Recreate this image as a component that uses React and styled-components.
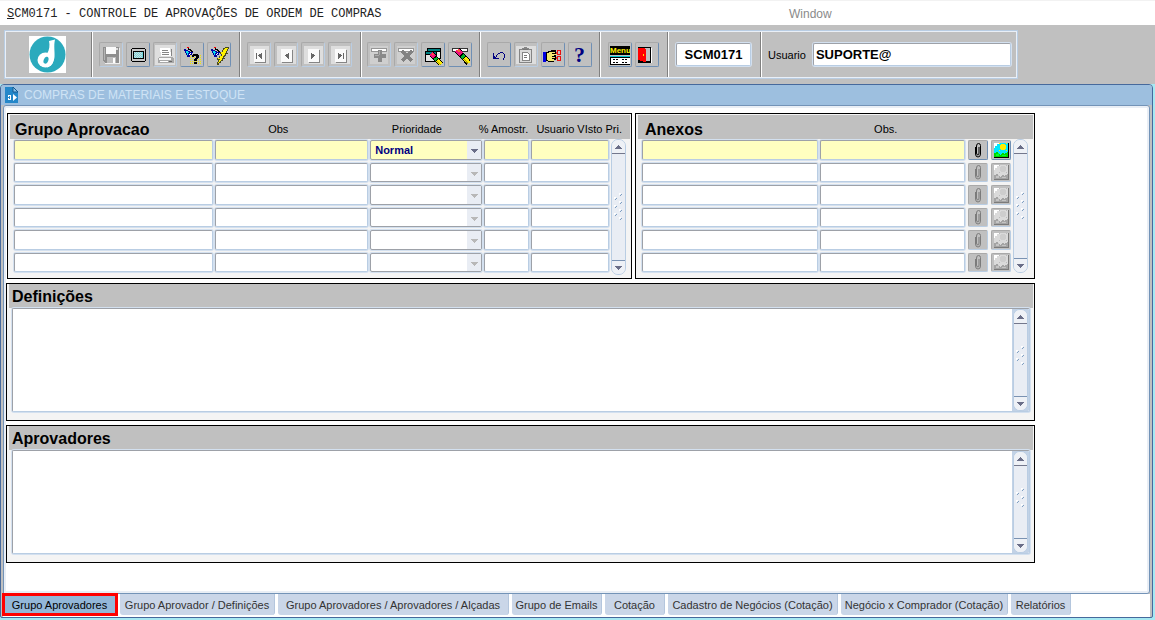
import React, { useState } from 'react';
import styled, { createGlobalStyle, css } from 'styled-components';

const GlobalStyle = createGlobalStyle`
    * {
        box-sizing: border-box;
    }
    body {
        margin: 0;
        font-family: "Liberation Sans", Arial, sans-serif;
        font-size: 11px;
        color: #000;
        background-color: #a6e8f2;
    }
    button, input, select, textarea {
        font: inherit;
        color: inherit;
        margin: 0;
        padding: 0;
    }
`;

const Page = styled.div`
    display: flex;
    flex-direction: column;
    min-height: 100vh;
`;

const MenuBar = styled.header`
    display: flex;
    align-items: center;
    height: 25px;
    padding: 1px 0 0 7px;
    background-color: #fff;
    border-top: 1px solid #f2f2f2;
`;

const MenuTitle = styled.h1`
    flex: 0 0 782px;
    margin: 0;
    font-family: "Liberation Mono", "Courier New", monospace;
    font-size: 12px;
    font-weight: normal;
    color: #222;
`;

const MenuItem = styled.button`
    border: none;
    background: none;
    font-size: 12px;
    color: #8a8a8a;
`;

const ToolArea = styled.div`
    padding: 5px 4px;
    background-color: #c0c0c0;
`;

const Toolbar = styled.div`
    display: flex;
    max-width: 1014px;
    height: 49px;
    border: 1px solid #b9cde3;
    outline: 1px solid #e9eff7;
    outline-offset: -2px;
`;

const ToolGroup = styled.div`
    display: flex;
    flex: ${props => props.$width ? `0 0 ${props.$width}px` : '1'};
    align-items: center;
    justify-content: center;
    gap: ${props => props.$gap || 3}px;
    padding-right: 2px;
    border-right: 1px solid #808080;
    border-left: 1px solid #fff;
    &:first-child {
        border-left-color: transparent;
    }
    &:last-child {
        padding: 0 6px;
        border-right: none;
    }
`;

const ToolButton = styled.button`
    display: flex;
    align-items: center;
    justify-content: center;
    width: 24px;
    height: 25px;
    background-color: #c0c0c0;
    border: 1px solid;
    border-color: ${props => props.disabled ? '#a9a9a9 #b9cde3 #b9cde3 #a9a9a9' : '#a9a9a9 #6f8fb4 #6f8fb4 #a9a9a9'};
    border-radius: 2px;
    svg {
        display: block;
        flex: none;
    }
`;

const HelpMark = styled.span`
    font-family: "Liberation Serif", "Times New Roman", serif;
    font-size: 22px;
    line-height: 22px;
    font-weight: bold;
    color: #000080;
`;

const fieldBorder = css`
    border: 1px solid;
    border-color: #9da1a8 #b9cde3 #b9cde3 #9da1a8;
    border-radius: 2px;
    box-shadow: 0 0 0 1px #d3e0ef;
`;

const ToolInput = styled.input`
    ${fieldBorder}
    flex: ${props => props.$width ? `0 0 ${props.$width}px` : '1'};
    min-width: 0;
    height: 23px;
    padding: 0 2px;
    font-size: 13px;
    font-weight: bold;
    text-align: ${props => props.$center ? 'center' : 'left'};
    background-color: #fff;
`;

const Window = styled.section`
    display: flex;
    flex: 1;
    flex-direction: column;
    margin: 0 2px 2px 0;
    background-color: #c0c0c0;
    border: 1px solid #46699c;
    border-radius: 4px 4px 2px 2px;
`;

const WindowTitle = styled.div`
    display: flex;
    align-items: center;
    gap: 5px;
    height: 20px;
    padding-left: 4px;
    background-color: #9dbfdf;
    border-radius: 3px 3px 0 0;
    h2 {
        margin: 0;
        font-size: 12px;
        font-weight: normal;
        color: #cfe3f5;
    }
`;

const Content = styled.main`
    flex: 1;
    margin: 0 2px;
    padding: 5px 0 0;
    background-color: #fff;
    border: 1px solid #7393b7;
    border-radius: 3px 3px 3px 0;
    box-shadow: inset 0 0 0 2px #e9eef5;
`;

const Panels = styled.div`
    display: flex;
    flex-direction: column;
    gap: 4px;
    max-width: 1031px;
    padding: 2px 0 0 2px;
`;

const PanelRow = styled.div`
    display: flex;
    gap: 3px;
    padding-left: 1px;
`;

const Panel = styled.section`
    flex: ${props => props.$grow || 'none'};
    min-width: 0;
    padding: ${props => props.$grow ? '1px 1px 0 2px' : '0 1px 0 2px'};
    background-color: #f4f4f4;
    border: 1px solid #000;
`;

const PanelTitle = styled.h3`
    margin: 0;
    font-size: 16px;
    line-height: ${props => props.$tall ? '22px' : '18px'};
    font-weight: bold;
`;

const PanelHeader = styled.div`
    display: grid;
    grid-template-columns: ${props => props.$columns};
    align-items: end;
    height: 24px;
    padding: 0 8px 0 ${props => props.$indent}px;
    background-color: #c0c0c0;
`;

const ColumnLabel = styled.span`
    line-height: 20px;
    text-align: ${props => props.$align || 'center'};
    white-space: nowrap;
`;

const GridBody = styled.div`
    display: flex;
    gap: 2px;
    height: 139px;
    padding: 0 ${props => props.$right}px 0 4px;
`;

const Records = styled.div`
    display: grid;
    flex: 1;
    grid-template-rows: repeat(6, 1fr);
    gap: 3px;
    height: 133px;
    padding-top: 1px;
`;

const Record = styled.div`
    display: grid;
    grid-template-columns: ${props => props.$columns};
    column-gap: 2px;
`;

const Cell = styled.input`
    ${fieldBorder}
    width: 100%;
    min-width: 0;
    padding: 0 3px;
    background-color: ${props => props.$active ? '#ffffc0' : '#fff'};
`;

const SelectBox = styled.div`
    ${fieldBorder}
    display: flex;
    position: relative;
    border-color: #9da1a8;
    background-color: ${props => props.$active ? '#ffffc0' : '#fff'};
    svg {
        position: absolute;
        right: 0;
        top: 0;
        height: 100%;
        pointer-events: none;
    }
`;

const Select = styled.select`
    width: 100%;
    padding-left: 4px;
    appearance: none;
    border: none;
    background: none;
    font-weight: bold;
    color: #000080;
    opacity: 1;
`;

const AttachButton = styled(ToolButton)`
    width: 20px;
    height: 100%;
    overflow: hidden;
`;

const Attachments = styled.div`
    display: flex;
    gap: 3px;
    padding-left: 1px;
`;

const ScrollFrame = styled.div`
    display: flex;
    flex-direction: column;
    width: 15px;
    height: ${props => props.$height};
    background-color: #e9edf4;
    border: 1px solid #b9cde3;
    border-radius: 7px;
`;

const ScrollWell = styled.div`
    padding: 0 1px;
    background-color: #c2d2e6;
`;

const ScrollArrow = styled.button`
    display: flex;
    align-items: center;
    justify-content: center;
    height: 14px;
    border: none;
    border-radius: ${props => props.$down ? '0 0 6px 6px' : '6px 6px 0 0'};
    border-bottom: ${props => props.$down ? 'none' : '1px solid #73778c'};
    border-top: ${props => props.$down ? '1px solid #7a92b2' : 'none'};
    background-color: #eef1f6;
`;

const ScrollTrack = styled.div`
    display: flex;
    flex: 1;
    align-items: center;
    justify-content: center;
`;

const TextFrame = styled.div`
    ${fieldBorder}
    display: flex;
    height: 104px;
    margin: 0 3px 8px;
    background-color: #fff;
    overflow: hidden;
`;

const TextArea = styled.textarea`
    flex: 1;
    padding: 2px 4px;
    border: none;
    resize: none;
`;

const TabBar = styled.nav`
    display: flex;
    gap: 3px;
    height: 23px;
    margin: 0 2px;
    background-color: #fff;
`;

const Tab = styled.button`
    flex: 0 0 ${props => props.$width}px;
    height: 21px;
    border: none;
    border-right: 1px solid #b4c6dd;
    border-radius: 0 0 3px 3px;
    background-color: #cad6e8;
    color: #333;
    white-space: nowrap;
    ${props => props.$selected && css`
        background-color: #93b7d8;
        color: #000;
        border-radius: 0;
        outline: 3px solid #f00;
        outline-offset: -2px;
        z-index: 1;
    `}
`;

const Icon = ({ children, size = 20 }) => (
    <svg width={size} height={size} viewBox={`0 0 ${size} ${size}`} shapeRendering="crispEdges" aria-hidden="true">
        {children}
    </svg>
);

const Logo = () => (
    <svg width="37" height="37" viewBox="0 0 37 37" role="img" aria-label="Logo">
        <rect width="37" height="37" fill="#fff" />
        <circle cx="18.5" cy="18.5" r="18" fill="#2baabd" />
        <ellipse cx="16.5" cy="24" rx="8" ry="7.5" fill="#fff" />
        <path d="M20 5 L26 3.6 C24.5 10 26 16 25.5 21 C25 26 22.5 30 18 31.5 L18 18 C20.5 14 21 9 20 5 Z" fill="#fff" />
        <ellipse cx="17" cy="24.2" rx="2.3" ry="3.6" transform="rotate(20 17 24.2)" fill="#2baabd" />
    </svg>
);

const WindowIcon = () => (
    <svg width="14" height="16" viewBox="0 0 14 16" aria-hidden="true">
        <path d="M0 0 H8 L13 5 V16 H0 Z" fill="#2487c9" />
        <path d="M8 0 V5 H13 Z" fill="#8cc4ea" stroke="#14598f" />
        <path d="M3 8 H6 V13 H3 Z M8 7 L12 10.5 L8 14 Z" fill="#fff" />
        <path d="M1 10 H4 V11 H1 Z M4 9 H5 V12 H4 Z" fill="#2487c9" />
    </svg>
);

const SaveIcon = () => (
    <Icon>
        <path d="M2 2 H18 V18 H4 L2 16 Z" fill="#8e8e8e" />
        <path d="M3 3 H4 V15 H3 Z" fill="#b4b4b4" />
        <rect x="5" y="2" width="10" height="7" fill="#fafafa" />
        <rect x="15" y="3" width="2" height="2" fill="#ddd" />
        <rect x="6" y="12" width="9" height="6" fill="#bdbdbd" />
        <rect x="12" y="13" width="2" height="5" fill="#fff" />
        <path d="M18 3 H19 V19 H4 V18 H18 Z" fill="#eee" />
    </Icon>
);

const ScreenIcon = () => (
    <Icon>
        <path d="M4 3 H17 V4 H18 V16 H17 V17 H4 V16 H3 V4 H4 Z" fill="#000" />
        <rect x="4" y="4" width="13" height="12" fill="#c8c8c8" />
        <rect x="5" y="6" width="11" height="8" fill="#000" />
        <rect x="6" y="7" width="9" height="6" fill="#d8d8d8" />
        {[7, 8, 9, 10, 11, 12].map(y => (
            [6, 8, 10, 12, 14].map(x => (
                <rect key={`${x}-${y}`} x={Math.min(x + (y % 2), 14)} y={y} width="1" height="1" fill="#6fd8de" />
            ))
        ))}
    </Icon>
);

const PrintIcon = () => (
    <Icon>
        <rect width="20" height="20" fill="#dedede" />
        <path d="M5 3 H15 L16 11 H6 Z" fill="#fff" />
        <path d="M7 5 H13 V6 H7 Z M7 7 H14 V8 H7 Z M7 9 H14 V10 H7 Z M16 4 H17 V11 H16 Z" fill="#858585" />
        <path d="M4 12 H17 L19 14 V18 H3 V13 Z" fill="#a8a8a8" />
        <path d="M4 13 H16 V15 H4 Z" fill="#f7f7f7" />
        <path d="M5 16 H13 V17 H5 Z" fill="#fff" />
        <path d="M14 16 H17 V17 H14 Z" fill="#666" />
    </Icon>
);

const Torch = () => (
    <g>
        <path d="M2 4 H4 V5 H6 V6 H8 V7 H11 V8 H10 V10 H8 V12 H5 V10 H4 V8 H3 V6 H2 Z" fill="#0000a0" />
        <path d="M4 6 H6 V7 H7 V8 H6 V10 H5 V8 H4 Z" fill="#00e0f0" />
        <path d="M8 8 H9 V9 H8 V10 H7 V9 H8 Z" fill="#fff" />
        <path d="M6 3 H7 V4 H9 V5 H10 V6 H11 V7 H9 V6 H8 V5 H6 Z" fill="#000" />
        <rect x="5" y="2" width="2" height="1" fill="#f00" />
    </g>
);

const QueryIcon = () => (
    <Icon>
        {[10, 12, 14, 16, 18].map(y => (
            <path key={y} d={`M8 ${y + 0.5} H20`} stroke="#f4e800" strokeDasharray="1 1" />
        ))}
        <Torch />
        <path d="M11 9 H16 V10 H17 V13 H16 V14 H15 V16 H12 V14 H13 V13 H14 V11 H12 V12 H10 V10 H11 Z M12 17 H15 V19 H12 Z" fill="#000" />
    </Icon>
);

const ExecuteIcon = () => (
    <Icon>
        <Torch />
        <path d="M16 2 H20 V4 H19 V6 H18 V8 H19 V9 H17 V11 H16 V12 H15 V13 H16 V14 H14 V16 H12 V18 H10 V20 H8 V17 H9 V15 H8 V13 H10 V11 H12 V9 H11 V7 H13 V5 H14 V3 H16 Z" fill="#4a4a20" />
        <path d="M16 3 H19 V4 H18 V6 H17 V8 H16 V10 H15 V11 H14 V13 H13 V15 H12 V16 H11 V17 H10 V18 H9 V17 H10 V15 H11 V14 H9 V13 H11 V11 H13 V9 H12 V7 H14 V5 H15 V4 H16 Z" fill="#fff200" />
    </Icon>
);

const NavIcon = ({ bar, flip }) => (
    <Icon>
        <rect x="1" y="1" width="19" height="18" fill="#dedede" />
        <path d="M6 5 H17 V18 H6 Z" fill="#858585" />
        <path d="M5 4 H16 V17 H5 Z" fill="#fafafa" />
        <g transform={flip ? 'translate(21 0) scale(-1 1)' : undefined} fill="#666">
            {bar && <rect x="7" y="8" width="1" height="6" />}
            <path d="M12 8 H13 V14 H12 V13 H11 V12 H10 V11 H9 V10 H10 V9 H12 Z" />
        </g>
    </Icon>
);

const InsertIcon = () => (
    <Icon>
        <rect x="1" y="1" width="18" height="18" fill="#cfcfcf" />
        <rect x="2.5" y="3.5" width="15" height="3" fill="#fff" stroke="#969696" />
        <path d="M9 5 H13 V9 H17 V13 H13 V17 H9 V13 H5 V9 H9 Z" fill="#8a8a8a" />
        <path d="M10 6 H11 V10 H6 V11 H10 Z" fill="#ababab" />
    </Icon>
);

const DeleteIcon = () => (
    <Icon>
        <rect x="1" y="1" width="18" height="18" fill="#cfcfcf" />
        <rect x="2.5" y="3.5" width="15" height="3" fill="#fff" stroke="#969696" />
        <path d="M6 6 L16 16 M16 6 L6 16" stroke="#828282" strokeWidth="3" />
    </Icon>
);

const Eraser = () => (
    <g fill="none">
        <path d="M7 5 L19 18" stroke="#000" strokeWidth="6" />
        <path d="M7 5 L11 9.3" stroke="#f0107a" strokeWidth="5" />
        <path d="M8 5 L10 7" stroke="#ff6030" strokeWidth="2" />
        <path d="M12 10.4 L14 12.6" stroke="#00b828" strokeWidth="4" />
        <path d="M14.5 13 L19 18" stroke="#fff000" strokeWidth="4" />
        <path d="M14 14 L18 18.4" stroke="#a89a00" strokeWidth="1" />
    </g>
);

const ClearFormIcon = () => (
    <Icon>
        <rect x="4" y="3" width="14" height="11" fill="#000" />
        <rect x="5" y="4" width="12" height="2" fill="#008080" />
        <rect x="5" y="7" width="12" height="6" fill="#eee" />
        <rect x="2" y="6" width="12" height="11" fill="#000" />
        <rect x="3" y="7" width="10" height="2" fill="#008080" />
        <rect x="3" y="10" width="10" height="6" fill="#e4e4e4" />
        <g transform="translate(2 4) scale(0.85)"><Eraser /></g>
    </Icon>
);

const ClearRecordIcon = () => (
    <Icon>
        <rect x="2.5" y="3.5" width="15" height="3" fill="#fff" stroke="#333" />
        <Eraser />
    </Icon>
);

const UndoIcon = () => (
    <Icon>
        <path d="M4 8 H5 V11 H6 V12 H7 V13 H10 V14 H4 Z" fill="#000080" />
        <path d="M6 12 H7 V10 H8 V9 H9 V8 H11 V7 H14 V8 H15 V9 H16 V13 H15 V15 H14 V13 H15 V9 H14 V8 H11 V9 H9 V10 H8 V12 Z" fill="#000080" />
    </Icon>
);

const ClipboardIcon = () => (
    <Icon>
        <rect x="0" y="1" width="20" height="18" fill="#dedede" />
        <path d="M3 4 H6 V3 H8 V2 H11 V3 H13 V4 H16 V18 H3 Z" fill="#858585" />
        <rect x="4" y="5" width="11" height="12" fill="#dadada" />
        <path d="M6 7 H11 L13 9 V15 H6 Z" fill="#fff" stroke="#858585" />
        <path d="M8 10 H11 V11 H8 Z M8 12 H11 V13 H8 Z M7 4 H12 V5 H7 Z" fill="#777" />
    </Icon>
);

const HandIcon = () => (
    <Icon>
        <path d="M3 7 H5 V6 H8 V5 H13 V7 H15 V10 H13 V15 H11 V17 H5 V16 H3 Z" fill="#000" />
        <path d="M4 8 H6 V7 H12 V8 H9 V9 H14 V10 H11 V11 H9 V12 H12 V13 H9 V14 H11 V16 H5 V15 H4 Z" fill="#f2e870" />
        <rect x="0" y="7" width="3" height="10" fill="#0000e0" />
        <path d="M13 7.5 L15 9 M13 13.5 L15 11" stroke="#e03030" />
        <rect x="14.5" y="5.5" width="3" height="4" fill="none" stroke="#e81010" />
        <rect x="14.5" y="11.5" width="3" height="4" fill="none" stroke="#e81010" />
    </Icon>
);

const MenuText = styled.text`
    font-family: "Liberation Sans", Arial, sans-serif;
    font-size: 8px;
    font-weight: bold;
    fill: #ffef00;
`;

const MenuIcon = () => (
    <Icon>
        <rect x="0" y="1" width="20" height="9" fill="#000" />
        <MenuText x="0" y="8">Menu</MenuText>
        <rect x="0" y="11" width="20" height="1" fill="#00c8d0" />
        <rect x="0" y="12" width="20" height="1" fill="#000" />
        <rect x="0" y="13" width="20" height="7" fill="#fff" />
        <path d="M3 14.5 H9 M12 14.5 H18 M3 17.5 H9 M12 17.5 H18" stroke="#000" strokeDasharray="2 1" />
        <path d="M0 19 H20 V20 H0 Z M0 13 H1 V20 H0 Z" fill="#000" />
    </Icon>
);

const ExitIcon = () => (
    <Icon>
        <rect x="1" y="2" width="13" height="16" fill="#000" />
        <rect x="8" y="3" width="5" height="13" fill="#c0c0c0" />
        <path d="M1 3 H7 L9 5 V17 H7 L1 15 Z" fill="#f00" />
        <rect x="6" y="9" width="1" height="2" fill="#ffe000" />
        <path d="M14 3 H15 V18 H14 Z" fill="#fff" />
    </Icon>
);

const ClipIcon = ({ active }) => (
    <svg width="16" height="16" viewBox="0 0 16 16" fill="none" stroke={active ? '#000' : '#7b7b7b'} aria-hidden="true">
        <path d="M5.5 5 V12 Q5.5 15 8 15 Q10.5 15 10.5 12 V3.5 Q10.5 1.5 8.5 1.5 Q6.5 1.5 6.5 4 V11 Q6.5 13 8 13 Q9 13 9 11 V5" />
    </svg>
);

const PictureIcon = ({ active }) => (
    <Icon size={16}>
        <rect x="1" y="1" width="15" height="15" fill={active ? '#000' : '#7b7b7b'} />
        <rect x="1" y="1" width="14" height="14" fill={active ? '#00e8ff' : '#dadada'} />
        <path d="M1 1 H6 V2 H4 V4 H2 V6 H1 Z" fill="#fff" />
        <path d="M7 3 H8 V2 H12 V3 H13 V7 H12 V8 H8 V7 H7 Z" fill={active ? '#ffee00' : '#cdcdcd'} />
        <path d="M6 1 H7 V2 H6 Z M13 1 H14 V2 H13 Z M6 8 H7 V9 H6 Z M13 8 H14 V9 H13 Z" fill={active ? '#ffee00' : '#bbb'} />
        <path d="M1 11 H3 V10 H5 V11 H6 V12 H7 V13 H8 V12 H9 V11 H11 V12 H12 V11 H14 V10 H15 V15 H1 Z" fill={active ? '#00d800' : '#a4a4a4'} />
        <path d="M3 12 H5 V11 H6 V14 H3 Z M9 13 H13 V14 H9 Z" fill={active ? '#00ff30' : '#c4c4c4'} />
    </Icon>
);

const DropArrow = ({ active }) => (
    <svg width="14" height="18" viewBox="0 0 14 18" preserveAspectRatio="none" shapeRendering="crispEdges" aria-hidden="true">
        <rect width="14" height="18" fill="#e9edf4" />
        <path d="M4 8 H11 V9 H10 V10 H9 V11 H8 V12 H7 V11 H6 V10 H5 V9 H4 Z" fill={active ? '#6a6e88' : '#b8b8b8'} />
    </svg>
);

const gripDots = [[6, 1], [1, 5], [6, 9], [1, 13], [6, 17], [1, 21], [6, 25]];

const Scrollbar = ({ height, dots = 7, label }) => (
    <ScrollFrame $height={height}>
        <ScrollArrow aria-label={`${label}: subir`}>
            <svg width="7" height="4" viewBox="0 0 7 4" shapeRendering="crispEdges">
                <path d="M3 0 H4 V1 H5 V2 H6 V3 H7 V4 H0 V3 H1 V2 H2 V1 H3 Z" fill="#6a6e88" />
            </svg>
        </ScrollArrow>
        <ScrollTrack>
            <svg width="9" height="28" viewBox="0 0 9 28" shapeRendering="crispEdges">
                {gripDots.slice(0, dots).map(([x, y]) => (
                    <g key={y}>
                        <path d={`M${x - 1} ${y - 1} h2 v1 h-1 v1 h-1 Z`} fill="#fff" />
                        <path d={`M${x + 1} ${y} h1 v1 h-1 v1 h-1 v-1 h1 Z`} fill="#7f9fc2" />
                    </g>
                ))}
            </svg>
        </ScrollTrack>
        <ScrollArrow $down aria-label={`${label}: descer`}>
            <svg width="7" height="4" viewBox="0 0 7 4" shapeRendering="crispEdges">
                <path d="M0 0 H7 V1 H6 V2 H5 V3 H4 V4 H3 V3 H2 V2 H1 V1 H0 Z" fill="#6a6e88" />
            </svg>
        </ScrollArrow>
    </ScrollFrame>
);

const toolGroups = [
    {
        width: 148,
        tools: [
            { name: 'Salvar', icon: <SaveIcon />, disabled: true },
            { name: 'Tela', icon: <ScreenIcon /> },
            { name: 'Imprimir', icon: <PrintIcon />, disabled: true },
            { name: 'Consultar', icon: <QueryIcon /> },
            { name: 'Executar consulta', icon: <ExecuteIcon /> }
        ]
    },
    {
        width: 121,
        tools: [
            { name: 'Primeiro', icon: <NavIcon bar />, disabled: true },
            { name: 'Anterior', icon: <NavIcon />, disabled: true },
            { name: 'Proximo', icon: <NavIcon flip />, disabled: true },
            { name: 'Ultimo', icon: <NavIcon bar flip />, disabled: true }
        ]
    },
    {
        width: 119,
        tools: [
            { name: 'Inserir', icon: <InsertIcon />, disabled: true },
            { name: 'Excluir', icon: <DeleteIcon />, disabled: true },
            { name: 'Limpar tela', icon: <ClearFormIcon /> },
            { name: 'Limpar registro', icon: <ClearRecordIcon /> }
        ]
    },
    {
        width: 120,
        tools: [
            { name: 'Desfazer', icon: <UndoIcon /> },
            { name: 'Colar', icon: <ClipboardIcon />, disabled: true },
            { name: 'Recortar', icon: <HandIcon /> },
            { name: 'Ajuda', icon: <HelpMark>?</HelpMark> }
        ]
    },
    {
        width: 68,
        tools: [
            { name: 'Menu', icon: <MenuIcon /> },
            { name: 'Sair', icon: <ExitIcon /> }
        ]
    }
];

const tabs = [
    { title: 'Grupo Aprovadores', width: 114 },
    { title: 'Grupo Aprovador / Definições', width: 155 },
    { title: 'Grupo Aprovadores / Aprovadores / Alçadas', width: 231 },
    { title: 'Grupo de Emails', width: 90 },
    { title: 'Cotação', width: 60 },
    { title: 'Cadastro de Negócios (Cotação)', width: 170 },
    { title: 'Negócio x Comprador (Cotação)', width: 167 },
    { title: 'Relatórios', width: 60 }
];

const rows = [0, 1, 2, 3, 4, 5];

const GroupPanel = () => (
    <Panel $grow="620 1 0">
        <PanelHeader $columns="187fr 154fr 124fr 49fr 94fr" $indent={5}>
            <PanelTitle>Grupo Aprovacao</PanelTitle>
            <ColumnLabel>Obs</ColumnLabel>
            <ColumnLabel>Prioridade</ColumnLabel>
            <ColumnLabel>% Amostr.</ColumnLabel>
            <ColumnLabel $align="right">Usuario VIsto Pri.</ColumnLabel>
        </PanelHeader>
        <GridBody $right={4}>
            <Records>
                {rows.map(row => (
                    <Record key={row} $columns="198fr 153fr 111fr 45fr 78fr">
                        <Cell $active={row === 0} aria-label="Grupo Aprovacao" />
                        <Cell $active={row === 0} aria-label="Obs" />
                        <SelectBox $active={row === 0}>
                            <Select aria-label="Prioridade" disabled={row !== 0}>
                                {row === 0 ? <option>Normal</option> : <option></option>}
                            </Select>
                            <DropArrow active={row === 0} />
                        </SelectBox>
                        <Cell $active={row === 0} aria-label="% Amostr." />
                        <Cell $active={row === 0} aria-label="Usuario VIsto Pri." />
                    </Record>
                ))}
            </Records>
            <Scrollbar height="136px" label="Grupo Aprovacao" />
        </GridBody>
    </Panel>
);

const AttachPanel = () => (
    <Panel $grow="395 1 0">
        <PanelHeader $columns="166fr 152fr 64fr" $indent={7}>
            <PanelTitle>Anexos</PanelTitle>
            <ColumnLabel>Obs.</ColumnLabel>
        </PanelHeader>
        <GridBody $right={5}>
            <Records>
                {rows.map(row => (
                    <Record key={row} $columns="176fr 145fr 44px">
                        <Cell $active={row === 0} aria-label="Anexos" />
                        <Cell $active={row === 0} aria-label="Obs." />
                        <Attachments>
                            <AttachButton disabled={row !== 0} aria-label="Anexar">
                                <ClipIcon active={row === 0} />
                            </AttachButton>
                            <AttachButton disabled={row !== 0} aria-label="Imagem">
                                <PictureIcon active={row === 0} />
                            </AttachButton>
                        </Attachments>
                    </Record>
                ))}
            </Records>
            <Scrollbar height="134px" label="Anexos" />
        </GridBody>
    </Panel>
);

const TextPanel = ({ title }) => (
    <Panel>
        <PanelHeader $columns="1fr" $indent={3}>
            <PanelTitle $tall>{title}</PanelTitle>
        </PanelHeader>
        <TextFrame>
            <TextArea aria-label={title} />
            <ScrollWell>
                <Scrollbar height="102px" dots={5} label={title} />
            </ScrollWell>
        </TextFrame>
    </Panel>
);

const App = () => {
    const [selected, setSelected] = useState(0);

    return (
        <Page>
            <GlobalStyle />
            <MenuBar>
                <MenuTitle><u>S</u>CM0171 - CONTROLE DE APROVAÇÕES DE ORDEM DE COMPRAS</MenuTitle>
                <MenuItem>Window</MenuItem>
            </MenuBar>
            <ToolArea>
                <Toolbar>
                    <ToolGroup $width={87}>
                        <Logo />
                    </ToolGroup>
                    {toolGroups.map(group => (
                        <ToolGroup key={group.width} $width={group.width}>
                            {group.tools.map(tool => (
                                <ToolButton key={tool.name} aria-label={tool.name} disabled={tool.disabled}>
                                    {tool.icon}
                                </ToolButton>
                            ))}
                        </ToolGroup>
                    ))}
                    <ToolGroup $width={93}>
                        <ToolInput $width={75} $center aria-label="Programa" defaultValue="SCM0171" />
                    </ToolGroup>
                    <ToolGroup $gap={7}>
                        <label htmlFor="usuario">Usuario</label>
                        <ToolInput id="usuario" defaultValue="SUPORTE@" />
                    </ToolGroup>
                </Toolbar>
            </ToolArea>
            <Window>
                <WindowTitle>
                    <WindowIcon />
                    <h2>COMPRAS DE MATERIAIS E ESTOQUE</h2>
                </WindowTitle>
                <Content>
                    <Panels>
                        <PanelRow>
                            <GroupPanel />
                            <AttachPanel />
                        </PanelRow>
                        <TextPanel title="Definições" />
                        <TextPanel title="Aprovadores" />
                    </Panels>
                </Content>
                <TabBar>
                    {tabs.map((tab, index) => (
                        <Tab
                            key={tab.title}
                            $width={tab.width}
                            $selected={index === selected}
                            onClick={() => setSelected(index)}
                        >
                            {tab.title}
                        </Tab>
                    ))}
                </TabBar>
            </Window>
        </Page>
    );
}

export default App;
